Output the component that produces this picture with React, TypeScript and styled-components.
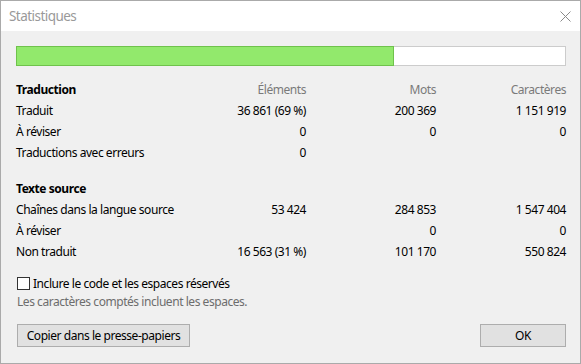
import React from "react";
import styled, { createGlobalStyle } from "styled-components";

const Global = createGlobalStyle`
  html, body { margin: 0; padding: 0; background: #f0f0f0; }
  body { font-family: "Noto Sans", "Segoe UI", sans-serif; }
`;

const Window = styled.div`
  box-sizing: border-box;
  width: 581px;
  height: 364px;
  border: 1px solid #aaaaaa;
  background: #f0f0f0;
  display: flex;
  flex-direction: column;
  font-size: 12px;
  letter-spacing: -0.45px;
  color: #000;
`;

const TitleBar = styled.div`
  height: 30px;
  background: #ffffff;
  display: flex;
  align-items: center;
  justify-content: space-between;
  padding: 0 8px 0 8px;
  flex-shrink: 0;
`;

const Title = styled.span`
  font-size: 13.5px;
  letter-spacing: -0.55px;
  color: #999999;
`;

const CloseBtn = styled.div`
  width: 30px;
  height: 30px;
  display: flex;
  align-items: center;
  justify-content: center;
  margin-right: -8px;
`;

const Body = styled.div`
  flex: 1;
  display: flex;
  flex-direction: column;
  padding: 15px 14px 16px 15px;
`;

const Progress = styled.div`
  height: 20px;
  box-sizing: border-box;
  display: flex;
  background: #ffffff;
  border: 1px solid #cccccc;
`;

const ProgressFill = styled.div`
  height: 20px;
  margin: -1px 0 0 -1px;
  box-sizing: border-box;
  background: #92e96c;
  border: 1px solid #6fc24c;
`;

const Table = styled.div<{ $top: number }>`
  display: grid;
  grid-template-columns: 1fr 130px 130px 130px;
  margin-top: ${(p) => p.$top}px;
`;

const Cell = styled.div<{ $bold?: boolean; $muted?: boolean; $num?: boolean }>`
  line-height: 21px;
  height: 21px;
  white-space: nowrap;
  font-weight: ${(p) => (p.$bold ? 700 : 400)};
  color: ${(p) => (p.$muted ? "#7a7a7a" : "#000")};
  text-align: ${(p) => (p.$num ? "right" : "left")};
`;

const CheckRow = styled.label`
  display: flex;
  align-items: center;
  gap: 3px;
  height: 18px;
  margin-top: 12px;
`;

const Box = styled.span`
  width: 13px;
  height: 13px;
  box-sizing: border-box;
  border: 1px solid #333333;
  background: #ffffff;
  margin-left: 1px;
`;

const Note = styled.div`
  line-height: 16px;
  color: #6d6d6d;
  margin: 2px 0 0 1px;
`;

const Buttons = styled.div`
  display: flex;
  justify-content: space-between;
  margin-top: 14px;
  padding-left: 1px;
`;

const Button = styled.div<{ $w: number }>`
  box-sizing: border-box;
  width: ${(p) => p.$w}px;
  height: 23px;
  background: #e1e1e1;
  border: 1px solid #adadad;
  display: flex;
  align-items: center;
  justify-content: center;
`;

type Row = { label: string; cells: string[]; head?: boolean };

const section1: Row[] = [
  { label: "Traduction", cells: ["Éléments", "Mots", "Caractères"], head: true },
  { label: "Traduit", cells: ["36 861 (69 %)", "200 369", "1 151 919"] },
  { label: "À réviser", cells: ["0", "0", "0"] },
  { label: "Traductions avec erreurs", cells: ["0", "", ""] },
];

const section2: Row[] = [
  { label: "Texte source", cells: ["", "", ""], head: true },
  { label: "Chaînes dans la langue source", cells: ["53 424", "284 853", "1 547 404"] },
  { label: "À réviser", cells: ["", "0", "0"] },
  { label: "Non traduit", cells: ["16 563 (31 %)", "101 170", "550 824"] },
];

function Section({ rows, top }: { rows: Row[]; top: number }) {
  return (
    <Table $top={top}>
      {rows.map((r, i) => (
        <React.Fragment key={i}>
          <Cell $bold={r.head}>{r.label}</Cell>
          {r.cells.map((c, j) => (
            <Cell key={j} $num $muted={r.head}>
              {c}
            </Cell>
          ))}
        </React.Fragment>
      ))}
    </Table>
  );
}

export default function App() {
  return (
    <>
      <Global />
      <Window>
        <TitleBar>
          <Title>Statistiques</Title>
          <CloseBtn>
            <svg width="11" height="11" viewBox="0 0 11 11">
              <path d="M0.5 0.5 L10.5 10.5 M10.5 0.5 L0.5 10.5" stroke="#8a8a8a" strokeWidth="1" fill="none" />
            </svg>
          </CloseBtn>
        </TitleBar>
        <Body>
          <Progress>
            <ProgressFill style={{ width: `${(379 / 549) * 100}%` }} />
          </Progress>
          <Section rows={section1} top={13} />
          <Section rows={section2} top={15} />
          <CheckRow>
            <Box />
            <span>Inclure le code et les espaces réservés</span>
          </CheckRow>
          <Note>Les caractères comptés incluent les espaces.</Note>
          <Buttons>
            <Button $w={173}>Copier dans le presse-papiers</Button>
            <Button $w={86}>OK</Button>
          </Buttons>
        </Body>
      </Window>
    </>
  );
}
